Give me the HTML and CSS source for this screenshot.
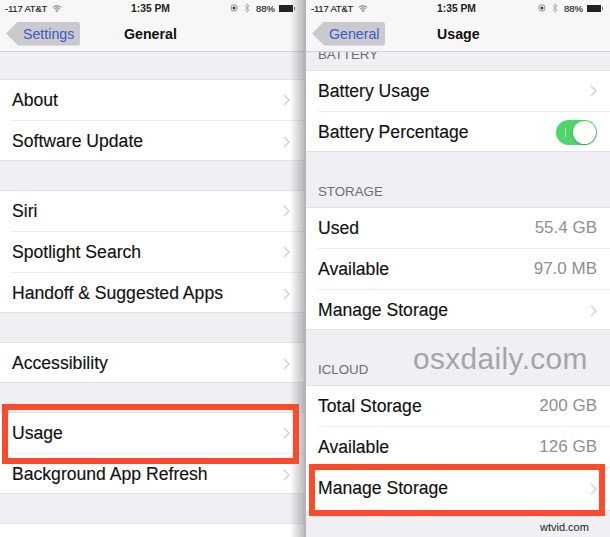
FILE: index.html
```html
<!DOCTYPE html>
<html lang="en">
<head>
<meta charset="utf-8">
<title>iOS Usage</title>
<link rel="stylesheet" href="styles.css">
</head>
<body>
<main class="shots">
  <section class="phone phone-left">
    <header class="top">
      <div class="status">
        <span class="st-left">-117 AT&amp;T <svg class="wifi" viewBox="0 0 14 10"><path d="M1 3.5C4.5 .5 9.5 .5 13 3.5M3 5.6C5.4 3.6 8.6 3.6 11 5.6M5 7.6C6.2 6.7 7.8 6.7 9 7.6" fill="none" stroke="#444" stroke-width="1.1"/><circle cx="7" cy="9" r=".9" fill="#444"/></svg></span>
        <span class="st-time">1:35 PM</span>
        <span class="st-right"><svg class="lock" viewBox="0 0 10 10"><circle cx="5" cy="5" r="4" fill="none" stroke="#555" stroke-width=".8"/><circle cx="5" cy="5" r="2" fill="#444"/></svg><svg class="bt" viewBox="0 0 7 12"><path d="M1 3L6 8.5L3.5 11V1L6 3.5L1 9" fill="none" stroke="#999" stroke-width=".9"/></svg><span class="pct">88%</span><span class="batt"></span></span>
      </div>
      <div class="nav">
        <span class="back">Settings</span>
        <span class="title">General</span>
      </div>
    </header>
    <div class="gap g-first"></div>
    <ul class="group">
      <li class="row">About<svg class="chev" viewBox="0 0 8 14"><path d="M1 1L7 7L1 13"/></svg></li>
      <li class="row">Software Update<svg class="chev" viewBox="0 0 8 14"><path d="M1 1L7 7L1 13"/></svg></li>
    </ul>
    <div class="gap"></div>
    <ul class="group">
      <li class="row">Siri<svg class="chev" viewBox="0 0 8 14"><path d="M1 1L7 7L1 13"/></svg></li>
      <li class="row">Spotlight Search<svg class="chev" viewBox="0 0 8 14"><path d="M1 1L7 7L1 13"/></svg></li>
      <li class="row">Handoff &amp; Suggested Apps<svg class="chev" viewBox="0 0 8 14"><path d="M1 1L7 7L1 13"/></svg></li>
    </ul>
    <div class="gap"></div>
    <ul class="group">
      <li class="row">Accessibility<svg class="chev" viewBox="0 0 8 14"><path d="M1 1L7 7L1 13"/></svg></li>
    </ul>
    <div class="gap"></div>
    <ul class="group">
      <li class="row">Usage<svg class="chev" viewBox="0 0 8 14"><path d="M1 1L7 7L1 13"/></svg></li>
      <li class="row">Background App Refresh<svg class="chev" viewBox="0 0 8 14"><path d="M1 1L7 7L1 13"/></svg></li>
    </ul>
    <div class="gap"></div>
    <ul class="group"><li class="row"></li></ul>
    <div class="edge"></div>
    <div class="mark mark-left"></div>
  </section>
  <section class="phone phone-right">
    <header class="top">
      <div class="status">
        <span class="st-left">-117 AT&amp;T <svg class="wifi" viewBox="0 0 14 10"><path d="M1 3.5C4.5 .5 9.5 .5 13 3.5M3 5.6C5.4 3.6 8.6 3.6 11 5.6M5 7.6C6.2 6.7 7.8 6.7 9 7.6" fill="none" stroke="#444" stroke-width="1.1"/><circle cx="7" cy="9" r=".9" fill="#444"/></svg></span>
        <span class="st-time">1:35 PM</span>
        <span class="st-right"><svg class="lock" viewBox="0 0 10 10"><circle cx="5" cy="5" r="4" fill="none" stroke="#555" stroke-width=".8"/><circle cx="5" cy="5" r="2" fill="#444"/></svg><svg class="bt" viewBox="0 0 7 12"><path d="M1 3L6 8.5L3.5 11V1L6 3.5L1 9" fill="none" stroke="#999" stroke-width=".9"/></svg><span class="pct">88%</span><span class="batt"></span></span>
      </div>
      <div class="nav">
        <span class="back">General</span>
        <span class="title">Usage</span>
      </div>
    </header>
    <div class="section-clip"><span class="section-label">BATTERY</span></div>
    <ul class="group">
      <li class="row">Battery Usage<svg class="chev" viewBox="0 0 8 14"><path d="M1 1L7 7L1 13"/></svg></li>
      <li class="row">Battery Percentage<span class="toggle"><span class="tick"></span><span class="knob"></span></span></li>
    </ul>
    <div class="section"><span class="section-label">STORAGE</span></div>
    <ul class="group">
      <li class="row">Used<span class="val">55.4 GB</span></li>
      <li class="row">Available<span class="val">97.0 MB</span></li>
      <li class="row">Manage Storage<svg class="chev" viewBox="0 0 8 14"><path d="M1 1L7 7L1 13"/></svg></li>
    </ul>
    <div class="section"><span class="section-label">ICLOUD</span></div>
    <ul class="group group-tail">
      <li class="row">Total Storage<span class="val">200 GB</span></li>
      <li class="row">Available<span class="val">126 GB</span></li>
      <li class="row">Manage Storage<svg class="chev" viewBox="0 0 8 14"><path d="M1 1L7 7L1 13"/></svg></li>
    </ul>
    <div class="mark mark-right"></div>
    <div class="wm">osxdaily.com</div>
    <div class="wt">wtvid.com</div>
  </section>
</main>
</body>
</html>
```
FILE: styles.css
```css
* { box-sizing: border-box; }
html, body { margin: 0; padding: 0; }
body { width: 610px; height: 537px; overflow: hidden; background: #efeff4; font-family: "Liberation Sans", Arial, sans-serif; color: #111; }
.shots { display: flex; width: 610px; height: 537px; }
.phone { position: relative; height: 537px; overflow: hidden; background: #efeff4; flex: none; }
.phone-left { width: 304px; }
.phone-right { width: 306px; border-left: 2px solid #b4b4b6; }
.top { height: 52px; background: #f7f7f8; border-bottom: 1px solid #d0d0d6; position: relative; z-index: 2; }
.status { height: 16px; display: flex; align-items: center; justify-content: space-between; padding: 0 8px 0 5px; font-size: 9.5px; color: #222; -webkit-text-stroke: .15px #222; position: relative; }
.phone-right .status { padding-right: 6px; }
.st-left { display: flex; align-items: center; gap: 5px; letter-spacing: -.2px; }
.wifi { width: 10px; height: 7px; }
.st-time { position: absolute; left: 131px; font-weight: bold; font-size: 10.3px; -webkit-text-stroke: 0; }
.st-right { display: flex; align-items: center; }
.lock { width: 8px; height: 8px; margin-right: 6px; }
.bt { width: 6px; height: 10px; margin-right: 6px; }
.pct { margin-right: 4px; }
.batt { width: 14px; height: 7px; margin-right: 3px; display: block; position: relative; background: #222; }
.batt::after { content: ""; position: absolute; left: 15px; top: 2px; width: 1px; height: 3px; background: #777; }
.nav { height: 35px; position: relative; display: flex; align-items: center; }
.back { margin-left: 6px; height: 24px; padding: 0 6px 0 17px; background: #c9c9ce; color: #3b59c9; font-size: 14.2px; line-height: 24px; clip-path: polygon(0 50%, 12px 0, 100% 0, 100% 100%, 12px 100%); border-radius: 3px; }
.title { position: absolute; left: 124px; font-weight: bold; font-size: 14.2px; }
.phone-right .title { left: 131px; }
.gap { height: 29px; }
.g-first { height: 27px; }
.group { list-style: none; margin: 0; padding: 0; background: #fff; border-top: 1px solid #e2e2e6; border-bottom: 1px solid #e2e2e6; }
.group-tail { padding-bottom: 3px; }
.row { height: 41px; margin-left: 12px; padding-right: 14px; display: flex; align-items: center; justify-content: space-between; font-size: 17.6px; -webkit-text-stroke: .15px #111; border-bottom: 1px solid #ececee; }
.row:last-child { height: 39px; padding-top: 2px; border-bottom: 0; }
.phone-right .row { padding-right: 13px; }
.chev { width: 7px; height: 12px; fill: none; stroke: #c9c9ce; stroke-width: 1.4; }
.val { color: #8e8e93; font-size: 17px; -webkit-text-stroke: 0; }
.section-clip { height: 18px; padding-left: 12px; overflow: hidden; }
.section-clip .section-label { position: relative; top: -4px; }
.section { height: 55px; padding: 33px 0 0 12px; }
.section-label { display: block; font-size: 13.3px; color: #6d6d72; line-height: 14px; }
.toggle { width: 41px; height: 25px; border-radius: 13px; background: #4fd568; position: relative; display: block; }
.tick { position: absolute; left: 9px; top: 8px; width: 1px; height: 9px; background: #a6ebb2; }
.knob { position: absolute; right: 1px; top: 1px; width: 23px; height: 23px; border-radius: 50%; background: #fff; box-shadow: 0 1px 2px rgba(0,0,0,.3); }
.mark { position: absolute; border: 6px solid #fc4a2c; z-index: 4; }
.mark-left { left: 2px; top: 404px; width: 297px; height: 60px; }
.mark-right { left: 3px; top: 464px; width: 296px; height: 52px; }
.edge { position: absolute; right: 0; top: 0; bottom: 0; width: 14px; background: linear-gradient(to right, rgba(110,110,115,0), rgba(110,110,115,.45)); z-index: 3; }
.wm { position: absolute; left: 107px; top: 342px; font-size: 29.8px; color: #a5a5a8; letter-spacing: .4px; }
.wt { position: absolute; left: 234px; top: 521px; font-size: 11px; color: #222; }
```
